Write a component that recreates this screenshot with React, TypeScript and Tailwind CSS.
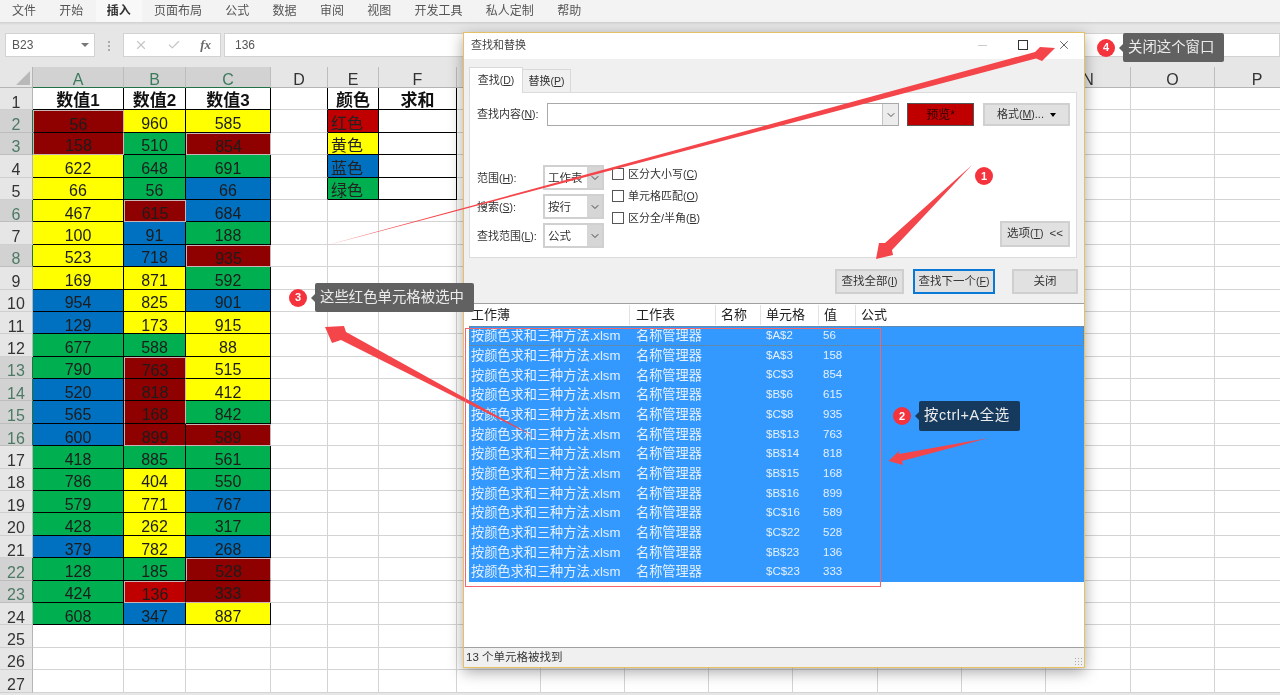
import { Check, ChevronDown, X } from 'lucide-react';
import clsx from 'clsx';
import type { ReactNode } from 'react';

type Fill = 'r' | 'R' | 'y' | 'g' | 'b';
type Cell = [number, Fill];

const tabs = ['文件', '开始', '插入', '页面布局', '公式', '数据', '审阅', '视图', '开发工具', '私人定制', '帮助'];
const columns = ['D', 'E', 'F', 'G', 'H', 'I', 'J', 'K', 'L', 'M', 'N', 'O', 'P'];

const rows: Cell[][] = [
  [[56, 'r'], [960, 'y'], [585, 'y']],
  [[158, 'r'], [510, 'g'], [854, 'r']],
  [[622, 'y'], [648, 'g'], [691, 'g']],
  [[66, 'y'], [56, 'g'], [66, 'b']],
  [[467, 'y'], [615, 'r'], [684, 'b']],
  [[100, 'y'], [91, 'b'], [188, 'g']],
  [[523, 'y'], [718, 'b'], [935, 'r']],
  [[169, 'y'], [871, 'y'], [592, 'g']],
  [[954, 'b'], [825, 'y'], [901, 'b']],
  [[129, 'b'], [173, 'y'], [915, 'y']],
  [[677, 'g'], [588, 'g'], [88, 'y']],
  [[790, 'g'], [763, 'r'], [515, 'y']],
  [[520, 'b'], [818, 'r'], [412, 'y']],
  [[565, 'b'], [168, 'r'], [842, 'g']],
  [[600, 'b'], [899, 'r'], [589, 'r']],
  [[418, 'g'], [885, 'g'], [561, 'g']],
  [[786, 'g'], [404, 'y'], [550, 'g']],
  [[579, 'g'], [771, 'y'], [767, 'b']],
  [[428, 'g'], [262, 'y'], [317, 'g']],
  [[379, 'b'], [782, 'y'], [268, 'b']],
  [[128, 'g'], [185, 'g'], [528, 'r']],
  [[424, 'g'], [136, 'R'], [333, 'r']],
  [[608, 'g'], [347, 'b'], [887, 'y']],
];

const fills: Record<Fill, string> = {
  r: 'bg-[#8f0000]',
  R: 'bg-[#c00000]',
  y: 'bg-[#ffff00]',
  g: 'bg-[#00b050]',
  b: 'bg-[#0070c0]',
};

const legend: [string, string][] = [
  ['红色', 'bg-[#c00000]'],
  ['黄色', 'bg-[#ffff00]'],
  ['蓝色', 'bg-[#0070c0]'],
  ['绿色', 'bg-[#00b050]'],
];

const found = [
  ['$A$2', '56'],
  ['$A$3', '158'],
  ['$C$3', '854'],
  ['$B$6', '615'],
  ['$C$8', '935'],
  ['$B$13', '763'],
  ['$B$14', '818'],
  ['$B$15', '168'],
  ['$B$16', '899'],
  ['$C$16', '589'],
  ['$C$22', '528'],
  ['$B$23', '136'],
  ['$C$23', '333'],
];

const isRed = (r: number, c: number) => {
  const cell = rows[r]?.[c];
  return !!cell && (cell[1] === 'r' || cell[1] === 'R');
};

function rowSelected(n: number) {
  const row = rows[n - 2];
  return !!row && row.some((c) => c[1] === 'r' || c[1] === 'R');
}

function RowHead({ n }: { n: number }) {
  const sel = rowSelected(n);
  return (
    <div
      className={clsx(
        'flex items-center justify-center pt-[8px] text-[16px] leading-none border-b border-r',
        sel ? 'bg-[#d2d2d2] text-[#4d7a64] border-b-[#bdbdbd] border-r-[#217346]' : 'bg-[#e6e6e6] text-[#333] border-b-[#cfcfcf] border-r-[#b5b5b5]'
      )}
    >
      {n}
    </div>
  );
}

function DataCell({ cell, r, c }: { cell: Cell; r: number; c: number }) {
  const sel = isRed(r, c);
  return (
    <div
      className={clsx(
        'flex items-center justify-center pt-[6px] text-[16px] leading-none text-[#1c1c1c] border-r border-b border-black',
        fills[cell[1]],
        sel && !isRed(r, c - 1) && 'border-l border-l-[#c9b5b5]',
        sel && !isRed(r, c + 1) && 'border-r-[#c9b5b5]',
        sel && !isRed(r - 1, c) && 'border-t border-t-[#c9b5b5]',
        sel && !isRed(r + 1, c) && 'border-b-[#c9b5b5]'
      )}
    >
      {cell[0]}
    </div>
  );
}

function Blank({ black }: { black?: boolean }) {
  return <div className={clsx('bg-white border-r border-b', black ? 'border-r-black border-b-[#d4d4d4]' : 'border-[#d4d4d4]')} />;
}

function BoxCell({ children, className }: { children?: ReactNode; className?: string }) {
  return <div className={clsx('flex items-center leading-none border-r border-b border-black', className)}>{children}</div>;
}

function Sheet() {
  return (
    <div className="grid grid-cols-[33px_91px_62px_85px_57px_51px_78px_84px_84px_84px_84px_85px_84px_84px_85px_84px_85px] grid-rows-[21px] auto-rows-[22.4px]">
      <div className="flex items-end justify-end bg-[#e6e6e6] border-r border-b border-[#b5b5b5] pr-[2px] pb-[2px]">
        <div className="w-0 h-0 border-l-[14px] border-l-transparent border-b-[14px] border-b-[#b9b9b9]" />
      </div>
      {['A', 'B', 'C'].map((c) => (
        <div key={c} className="flex items-center justify-center pt-[5px] text-[16px] leading-none text-[#3c7a5c] bg-[#d2d2d2] border-r border-r-[#bdbdbd] border-b border-b-[#217346]">
          {c}
        </div>
      ))}
      {columns.map((c) => (
        <div key={c} className="flex items-center justify-center pt-[5px] text-[16px] leading-none text-[#333] bg-[#e6e6e6] border-r border-r-[#bdbdbd] border-b border-b-[#b5b5b5]">
          {c}
        </div>
      ))}

      <RowHead n={1} />
      {['数值1', '数值2', '数值3'].map((t) => (
        <BoxCell key={t} className="justify-center bg-white pt-[3px] text-[17px] font-bold text-[#111]">
          {t}
        </BoxCell>
      ))}
      <Blank black />
      <BoxCell className="justify-center bg-white pt-[3px] text-[17px] font-bold text-[#111]">颜色</BoxCell>
      <BoxCell className="justify-center bg-white pt-[3px] text-[17px] font-bold text-[#111]">求和</BoxCell>
      {columns.slice(3).map((c) => (
        <Blank key={c} />
      ))}

      {rows.map((row, r) => (
        <div key={r} className="contents">
          <RowHead n={r + 2} />
          {row.map((cell, c) => (
            <DataCell key={c} cell={cell} r={r} c={c} />
          ))}
          <Blank black={r < 4} />
          {r < 4 ? (
            <>
              <BoxCell className={clsx('pl-[3px] pt-[6px] text-[16px] text-[#222]', legend[r][1])}>{legend[r][0]}</BoxCell>
              <BoxCell className="bg-white" />
            </>
          ) : (
            <>
              <Blank />
              <Blank />
            </>
          )}
          {columns.slice(3).map((c) => (
            <Blank key={c} />
          ))}
        </div>
      ))}

      {[25, 26, 27].map((n) => (
        <div key={n} className="contents">
          <RowHead n={n} />
          {Array.from({ length: 16 }).map((_, i) => (
            <Blank key={i} />
          ))}
        </div>
      ))}
    </div>
  );
}

function Key({ k }: { k: string }) {
  return <span className="text-[10.5px]">(<span className="underline">{k}</span>)</span>;
}

function Select({ value }: { value: string }) {
  return (
    <div className="flex h-[25px] bg-white border-2 border-[#d0d0d0]">
      <span className="flex-1 pl-[3px] pt-[1px] text-[11.5px] leading-[21px] text-[#333]">{value}</span>
      <span className="flex w-[15px] items-center justify-center bg-[#d6d6d6]">
        <ChevronDown size={12} className="text-[#444]" />
      </span>
    </div>
  );
}

function Option({ children }: { children: ReactNode }) {
  return (
    <div className="flex h-[22px] items-center gap-[4px] text-[11px] text-[#333]">
      <span className="w-[12px] h-[12px] bg-white border border-[#555]" />
      <span>{children}</span>
    </div>
  );
}

function DialogButton({ children, className }: { children: ReactNode; className?: string }) {
  return <div className={clsx('flex items-center justify-center whitespace-nowrap text-[11.5px] text-[#333] bg-[#e1e1e1] border-2', className)}>{children}</div>;
}

function FindDialog() {
  return (
    <div className="absolute left-[463px] top-[32px] flex h-[636px] w-[622px] flex-col border border-[#e6c063] bg-[#f0f0f0] shadow-[0_4px_14px_rgba(0,0,0,0.35)]">
      <div className="flex h-[26px] items-center bg-white pb-[2px] pl-[7px] pr-[13px] text-[11px] text-[#444]">
        <span className="flex-1">查找和替换</span>
        <span className="mr-[31px] h-px w-[9px] bg-[#ccc]" />
        <span className="mr-[29px] h-[10px] w-[10px] border border-[#333]" />
        <X size={14} strokeWidth={1.2} className="text-[#222]" />
      </div>

      <div className="ml-[5px] mt-[8px] flex h-[25px] items-end text-[11px] text-[#333]">
        <div className="z-10 -mb-px flex h-[26px] w-[54px] items-center justify-center border border-b-0 border-[#d9d9d9] bg-white">
          <span>查找<Key k="D" /></span>
        </div>
        <div className="flex h-[23px] w-[48px] items-center justify-center border border-l-0 border-b-0 border-[#d9d9d9]">
          <span>替换<Key k="P" /></span>
        </div>
      </div>

      <div className="ml-[5px] mr-[7px] flex h-[166px] flex-col border border-[#dcdcdc] bg-white pl-[7px] pr-[6px] pt-[10px]">
        <div className="flex h-[23px] items-center text-[11px] text-[#333]">
          <span className="w-[70px] whitespace-nowrap">查找内容<Key k="N" />:</span>
          <div className="flex h-full w-[352px] justify-end border border-[#a9a9a9] bg-white">
            <span className="flex w-[16px] items-center justify-center bg-[#ececec] border-l border-[#c4c4c4]">
              <ChevronDown size={12} className="text-[#555]" />
            </span>
          </div>
          <div className="ml-[8px] flex h-full w-[67px] items-center justify-center border border-[#555] bg-[#c00000] text-[12px] text-[#2a0000]">预览*</div>
          <div className="ml-[9px] flex h-full w-[87px] items-center justify-center gap-[6px] border-2 border-[#d0d0d0] bg-[#e1e1e1]">
            <span>格式<Key k="M" />...</span>
            <span className="h-0 w-0 border-x-[3px] border-t-[4px] border-x-transparent border-t-black" />
          </div>
        </div>

        <div className="mt-[39px] flex">
          <div className="flex w-[66px] flex-col gap-[4px] whitespace-nowrap pt-[1px] text-[11px] text-[#333]">
            <span className="h-[25px] leading-[25px]">范围<Key k="H" />:</span>
            <span className="h-[25px] leading-[25px]">搜索<Key k="S" />:</span>
            <span className="h-[25px] leading-[25px]">查找范围<Key k="L" />:</span>
          </div>
          <div className="flex w-[61px] flex-col gap-[4px]">
            <Select value="工作表" />
            <Select value="按行" />
            <Select value="公式" />
          </div>
          <div className="-mt-[2px] ml-[8px]">
            <Option>区分大小写<Key k="C" /></Option>
            <Option>单元格匹配<Key k="O" /></Option>
            <Option>区分全/半角<Key k="B" /></Option>
          </div>
          <DialogButton className="ml-auto mb-[2px] h-[26px] w-[70px] self-end gap-[6px] border-[#d0d0d0]">
            <span>选项<Key k="T" /></span>
            <span>&lt;&lt;</span>
          </DialogButton>
        </div>
      </div>

      <div className="mt-[11px] flex h-[25px] justify-end pr-[6px]">
        <DialogButton className="w-[69px] border-[#cfcfcf]">查找全部<Key k="I" /></DialogButton>
        <DialogButton className="ml-[9px] w-[82px] border-[#0a78d7]">查找下一个<Key k="F" /></DialogButton>
        <DialogButton className="ml-[17px] w-[66px] border-[#cfcfcf]">关闭</DialogButton>
      </div>

      <div className="mt-[9px] flex h-[345px] flex-col border-y border-[#a0a0a0] bg-white">
        <div className="grid h-[22px] grid-cols-[165px_86px_45px_58px_37px_1fr] items-center text-[13px] text-[#222]">
          <span className="pl-[7px]">工作薄</span>
          <span className="border-l border-[#e2e2e2] pl-[6px]">工作表</span>
          <span className="border-l border-[#e2e2e2] pl-[5px]">名称</span>
          <span className="border-l border-[#e2e2e2] pl-[5px]">单元格</span>
          <span className="border-l border-[#e2e2e2] pl-[5px]">值</span>
          <span className="border-l border-[#e2e2e2] pl-[5px]">公式</span>
        </div>
        <div className="ml-[5px] bg-[#3399ff] text-[#e4f0ff]">
          {found.map(([cell, value], i) => (
            <div
              key={cell}
              className={clsx(
                'grid h-[19.7px] grid-cols-[160px_86px_45px_58px_37px_1fr] items-center text-[13.2px] leading-none',
                i === 0 && 'outline outline-1 -outline-offset-1 outline-dotted outline-[#8a7a60]'
              )}
            >
              <span className="whitespace-nowrap pl-[2px]">按颜色求和三种方法.xlsm</span>
              <span className="pl-[7px]">名称管理器</span>
              <span />
              <span className="pl-[6px] text-[11.5px]">{cell}</span>
              <span className="pl-[5px] text-[11.5px]">{value}</span>
            </div>
          ))}
        </div>
      </div>

      <div className="relative flex flex-1 items-center pl-[2px] text-[11.5px] text-[#333]">
        13 个单元格被找到
        <span className="absolute bottom-[2px] right-[2px] h-[8px] w-[8px] bg-[radial-gradient(#aaa_1px,transparent_1px)] bg-[length:3px_3px]" />
      </div>
    </div>
  );
}

// hand-placed annotation arrows: thin tail, widening to a skewed head
function Arrows() {
  return (
    <svg className="absolute left-0 top-0 h-[695px] w-[1280px]" viewBox="0 0 1280 695" fill="#f4454a">
      <polygon points="324,246 1035,52 1040,47 1055,48 1042,61 1036,58.5" />
      <polygon points="972,165 885,243 879,243 876,259 893,255 892,250" />
      <polygon points="537,438 346,332 344,326 325,327 332,343 341,340" />
      <polygon points="988.5,438 899,454 899,451 888.5,461 903,465 902,461" />
    </svg>
  );
}

function Badge({ n, className }: { n: number; className: string }) {
  return (
    <span className={clsx('absolute flex h-[18px] w-[18px] items-center justify-center rounded-full bg-[#f4333c] text-[11px] font-bold text-white', className)}>
      {n}
    </span>
  );
}

function Note({ n, text, className, box }: { n: number; text: string; className: string; box: string }) {
  return (
    <div className={clsx('absolute flex items-center', className)}>
      <span className="flex h-[18px] w-[18px] items-center justify-center rounded-full bg-[#f4333c] text-[11px] font-bold text-white">{n}</span>
      <span className="flex w-[8px] justify-end">
        <span className={clsx('h-0 w-0 border-y-[4px] border-r-[4px] border-y-transparent', box === 'navy' ? 'border-r-[#153a5e]' : 'border-r-[#616161]')} />
      </span>
      <span
        className={clsx(
          'flex items-center rounded-[2px] pl-[5px] pr-[10px] text-[14.4px] text-[#ececec]',
          box === 'navy' ? 'h-[30px] bg-[#153a5e] tracking-[0.6px]' : 'h-[29px] bg-[#616161]'
        )}
      >
        {text}
      </span>
    </div>
  );
}

export default function App() {
  return (
    <div className="relative h-[695px] w-[1280px] overflow-hidden bg-[#e6e6e6] blur-[0.3px] font-['Liberation_Sans','Noto_Sans_CJK_SC',sans-serif]">
      <div className="flex h-[22px] gap-[23.3px] bg-[#f3f3f3] pl-[12px] text-[12px] text-[#555]">
        {tabs.map((t) => (
          <span key={t} className={clsx('relative flex items-center', t === '插入' && "font-semibold text-[#333] before:absolute before:-inset-x-[11px] before:inset-y-0 before:-z-0 before:bg-[#f8f8f8] before:content-['']")}>
            <span className="relative">{t}</span>
          </span>
        ))}
      </div>
      <div className="h-[3px] bg-gradient-to-b from-[#cfcfcf] to-[#e6e6e6]" />

      <div className="flex h-[42px] items-start pt-[8px] text-[#555]">
        <div className="ml-[5px] flex h-[24px] w-[90px] items-center justify-between border border-[#d2d2d2] bg-white pl-[6px] pr-[5px] text-[12px]">
          <span>B23</span>
          <span className="h-0 w-0 border-x-[4px] border-t-[4px] border-x-transparent border-t-[#777]" />
        </div>
        <div className="mx-[13px] mt-[8px] flex flex-col gap-[2px]">
          <span className="h-[2px] w-[2px] bg-[#aaa]" />
          <span className="h-[2px] w-[2px] bg-[#aaa]" />
          <span className="h-[2px] w-[2px] bg-[#aaa]" />
        </div>
        <div className="flex h-[24px] w-[98px] items-center justify-between border border-[#d2d2d2] bg-white pl-[10px] pr-[9px]">
          <X size={14} className="text-[#c4c4c4]" />
          <Check size={14} className="text-[#c4c4c4]" />
          <span className="font-['Liberation_Serif',serif] text-[13px] font-bold italic text-[#666]">fx</span>
        </div>
        <div className="ml-[3px] flex h-[24px] flex-1 items-center border border-[#d2d2d2] bg-white pl-[10px] text-[12px]">136</div>
      </div>

      <Sheet />
      <FindDialog />
      <Arrows />
      <div className="absolute left-[465px] top-[328px] h-[259px] w-[416px] border border-[#f2656c]" />

      <Badge n={1} className="left-[975px] top-[167px]" />
      <Note n={4} text="关闭这个窗口" className="left-[1097px] top-[33px]" box="gray" />
      <Note n={3} text="这些红色单元格被选中" className="left-[289px] top-[283px]" box="gray" />
      <Note n={2} text="按ctrl+A全选" className="left-[893px] top-[401px]" box="navy" />
    </div>
  );
}
